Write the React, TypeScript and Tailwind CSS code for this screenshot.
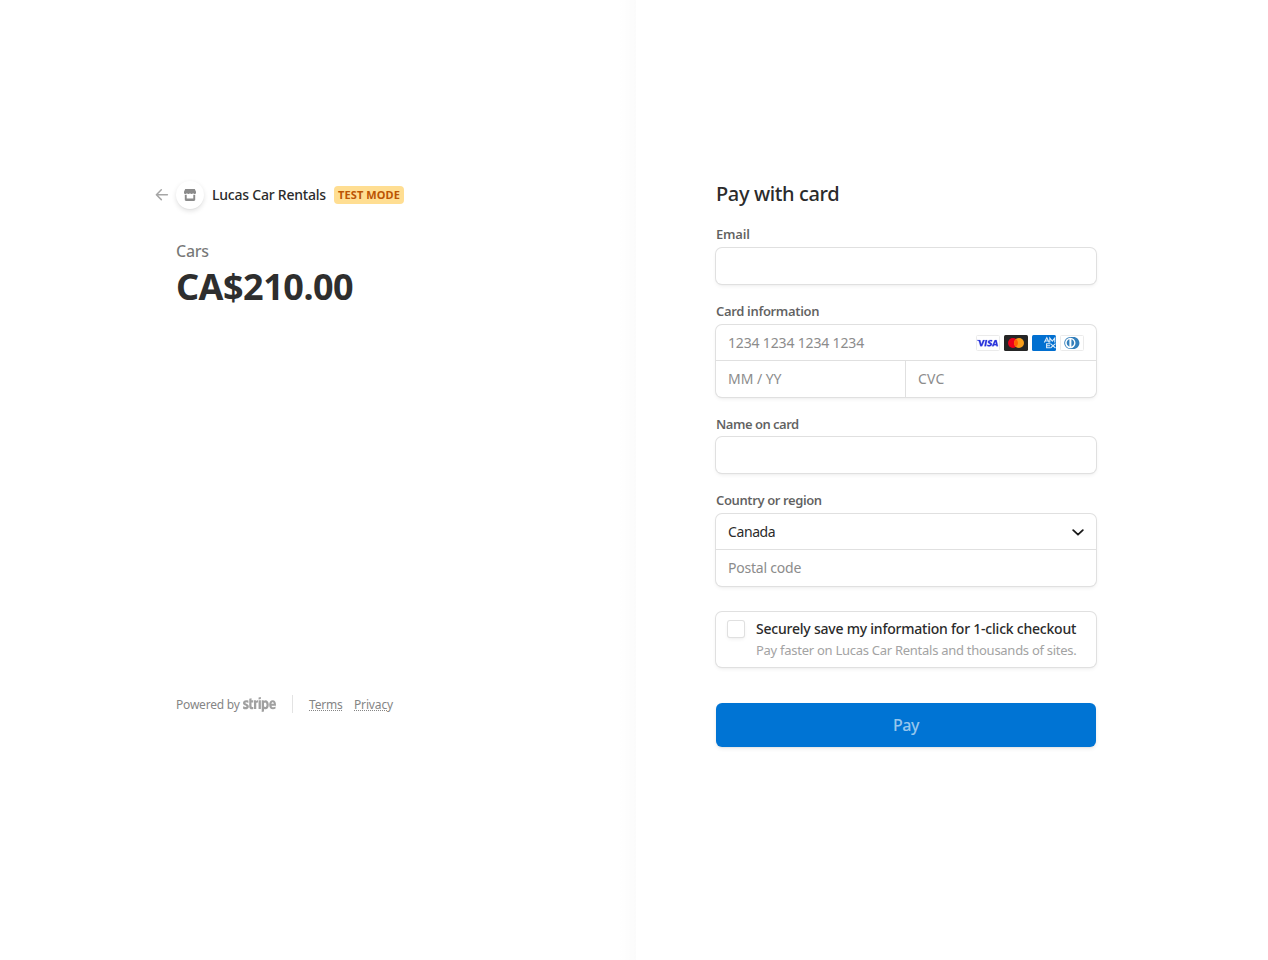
import type { ReactNode } from "react";

const box =
  "rounded-[6px] bg-white shadow-[0_0_0_1px_#e0e0e0,0_2px_4px_0_rgba(0,0,0,0.07),0_1px_1.5px_0_rgba(0,0,0,0.05)]";

function Label({ children, className }: { children: ReactNode; className: string }) {
  return (
    <div className={`h-[26px] text-[13px] font-semibold text-[#1a1a1a]/70 ${className}`}>{children}</div>
  );
}

function StoreIcon() {
  return (
    <svg width="12" height="12" viewBox="0 0 12 12" fill="#8a8a8a">
      <path d="M1.200 0h9.600L12 2.800v1c0 .8-.6 1.300-1.400 1.300-.7 0-1.200-.3-1.500-.8-.3.500-.9.800-1.600.8S6.300 4.800 6 4.300c-.3.500-.8.800-1.500.800s-1.300-.3-1.600-.8c-.3.500-.8.800-1.500.800C.6 5.100 0 4.600 0 3.800v-1z" />
      <path d="M.800 5.700h1.900v3.700h6.600V5.700h1.900v5.100c0 .7-.5 1.200-1.200 1.200H2c-.7 0-1.200-.5-1.200-1.200z" />
    </svg>
  );
}

function Visa() {
  return (
    <svg width="24" height="16" viewBox="0 0 24 16">
      <rect x=".5" y=".5" width="23" height="15" rx="1" fill="#fff" stroke="#ebebeb" />
      <path
        fill="#2b35dc"
        stroke="#2b35dc"
        strokeWidth=".2"
        d="M2.788 5.914A7.201 7.201 0 0 0 1 5.237l.028-.125h2.737c.371.013.672.125.77.519l.595 2.836.182.854 1.666-4.21h1.799l-2.674 6.167H4.304L2.788 5.914Zm7.312 5.370H8.399l1.064-6.172h1.701L10.100 11.284Zm6.167-6.021-.232 1.333-.153-.066a3.054 3.054 0 0 0-1.268-.236c-.671 0-.972.269-.98.531 0 .29.365.480.96.762.980.440 1.435.979 1.428 1.681-.014 1.280-1.176 2.108-2.960 2.108-.764-.007-1.500-.158-1.898-.328l.238-1.386.224.099c.553.230.917.328 1.596.328.490 0 1.015-.190 1.022-.604 0-.270-.224-.466-.882-.769-.644-.295-1.505-.788-1.491-1.674C11.878 5.840 13.060 5 14.740 5c.658 0 1.190.138 1.526.263Zm2.260 3.834h1.415c-.070-.308-.392-1.786-.392-1.786l-.120-.531c-.083.230-.230.604-.223.590l-.680 1.727Zm2.100-3.985L22 11.284h-1.575s-.154-.710-.203-.926h-2.184l-.357.926h-1.785l2.527-5.660c.175-.400.483-.512.889-.512h1.315Z"
      />
    </svg>
  );
}

function Mastercard() {
  return (
    <svg width="24" height="16" viewBox="0 0 24 16">
      <rect width="24" height="16" rx="1.500" fill="#252525" />
      <circle cx="9" cy="8" r="5" fill="#eb001b" />
      <circle cx="15" cy="8" r="5" fill="#f79e1b" />
      <path d="M12 4a5 5 0 0 0 0 8 5 5 0 0 0 0-8z" fill="#ff5f00" />
    </svg>
  );
}

function Amex() {
  return (
    <svg width="24" height="16" viewBox="0 0 24 16">
      <rect width="24" height="16" rx="1.500" fill="#016fd0" />
      <g fill="none" stroke="#fff" strokeOpacity=".85" strokeWidth="1.100">
        <path d="M12.300 7.600 14.800 2.800l2.400 4.800M13.300 6h3" />
        <path d="M17.800 7.600V3.100l2.500 3.100 2.500-3.100v4.500" />
        <path d="M18.200 8.800h-3.600v4h3.600M14.600 10.800h3.400" />
        <path d="M18.500 8.600l5 4.400M23.500 8.600l-5 4.400" />
      </g>
    </svg>
  );
}

function Diners() {
  return (
    <svg width="24" height="16" viewBox="0 0 24 16">
      <rect x=".5" y=".5" width="23" height="15" rx="1" fill="#fff" stroke="#ebebeb" />
      <path d="M10.200 2h3.200c3.400 0 6 2.700 6 6s-2.600 6-6 6h-3.200a6 6 0 0 1 0-12z" fill="#3480bc" />
      <circle cx="10.300" cy="8" r="5.200" fill="#fff" />
      <path d="M9.400 4.200a4 4 0 0 0 0 7.600zM11.400 4.200v7.600a4 4 0 0 0 0-7.600z" fill="#3480bc" />
    </svg>
  );
}

function Summary() {
  return (
    <section className="flex w-[636px] flex-col bg-white bg-[linear-gradient(to_right,transparent_618px,rgba(0,0,0,0.017)_636px)] pt-[181px] pl-[155px]">
      <header className="flex h-7 items-center">
        <svg width="14" height="12" viewBox="0 0 14 12" fill="none" stroke="#a6a6a6" strokeWidth="1.500" strokeLinecap="round" strokeLinejoin="round">
          <path d="M6.300.8 1.400 5.700l4.900 4.900M1.600 5.700h10.800" />
        </svg>
        <div className="ml-[7px] flex size-7 items-center justify-center rounded-full bg-white shadow-[0_2px_5px_rgba(0,0,0,0.12),0_1px_1px_rgba(0,0,0,0.03)]">
          <StoreIcon />
        </div>
        <h1 className="ml-2 w-[122px] text-[14px] leading-5 font-medium tracking-[-0.22px] whitespace-nowrap text-[#2b2b2b]">
          Lucas Car Rentals
        </h1>
        <span className="flex h-[18px] w-[70px] items-center justify-center rounded-[4px] bg-[#ffde92] text-[11px] font-bold tracking-[0.1px] whitespace-nowrap text-[#bb5504]">
          TEST MODE
        </span>
      </header>
      <div className="mt-[30px] ml-[21px] flex h-[450px] flex-col">
        <div className="h-6 text-[16px] leading-6 font-medium tracking-[-0.25px] text-[#1a1a1a]/60">Cars</div>
        <div className="mt-px h-[46px] text-[36px] leading-[46px] font-bold tracking-[-0.5px] text-[#2e2e2e]">
          CA$210.00
        </div>
      </div>
      <footer className="mt-[6px] ml-[21px] flex h-[18px] items-center text-[12px] leading-[18px] text-[#858585]">
        <span className="w-[67px] pt-[2px] tracking-[-0.2px] whitespace-nowrap">Powered by</span>
        <svg width="33" height="15" viewBox="54 36 360.020 149.840" preserveAspectRatio="none" fill="#a0a0a0" fillRule="evenodd" aria-label="Stripe">
          <path d="M414 113.400c0-25.600-12.400-45.800-36.100-45.800-23.800 0-38.200 20.200-38.200 45.600 0 30.100 17 45.300 41.400 45.300 11.900 0 20.900-2.700 27.700-6.500v-20c-6.800 3.400-14.600 5.500-24.500 5.500-9.700 0-18.300-3.400-19.400-15.200h48.900c0-1.300.2-6.500.2-8.900zm-49.400-9.500c0-11.300 6.900-16 13.200-16 6.100 0 12.600 4.700 12.600 16h-25.800z" />
          <path d="M301.100 67.600c-9.800 0-16.100 4.600-19.600 7.800l-1.300-6.200h-22v116.600l25-5.300.1-28.300c3.600 2.600 8.900 6.300 17.700 6.300 17.900 0 34.200-14.400 34.200-46.100-.1-29-16.600-44.800-34.100-44.800zm-6 68.900c-5.900 0-9.400-2.100-11.800-4.700l-.1-37.100c2.600-2.900 6.200-4.900 11.900-4.900 9.100 0 15.400 10.200 15.400 23.300 0 13.400-6.200 23.400-15.400 23.400z" />
          <path d="M223.800 61.700l25.100-5.400V36l-25.100 5.300zM223.800 69.300h25.100v87.500h-25.100zM196.900 76.700l-1.600-7.400h-21.600v87.500h25V97.500c5.900-7.700 15.900-6.300 19-5.200v-23c-3.200-1.200-14.900-3.400-20.800 7.400zM146.900 47.600l-24.400 5.200-.1 80.100c0 14.800 11.100 25.700 25.900 25.700 8.200 0 14.200-1.500 17.500-3.300V135c-3.200 1.300-19 5.900-19-8.900V90.600h19V69.300h-19zM79.300 94.700c0-3.900 3.200-5.400 8.500-5.400 7.600 0 17.200 2.300 24.800 6.400V72.200c-8.300-3.300-16.500-4.600-24.800-4.600C67.500 67.600 54 78.200 54 95.900c0 27.600 38 23.200 38 35.100 0 4.600-4 6.100-9.600 6.100-8.300 0-18.900-3.400-27.300-8v23.800c9.300 4 18.700 5.700 27.300 5.700 20.800 0 35.100-10.300 35.100-28.200-.1-29.800-38.200-24.500-38.200-35.700z" />
        </svg>
        <span className="ml-4 h-[18px] w-px bg-[#e3e3e3]" />
        <a className="ml-4 w-[45px] pt-[2px] tracking-[-0.2px] underline decoration-dotted underline-offset-1">Terms</a>
        <a className="pt-[2px] tracking-[-0.15px] underline decoration-dotted underline-offset-1">Privacy</a>
      </footer>
    </section>
  );
}

function Payment() {
  return (
    <section className="flex flex-1 flex-col bg-white pt-[179px] pl-20">
      <form className="flex w-[380px] flex-col">
        <h2 className="h-[43px] text-[20px] leading-[30px] font-medium tracking-[-0.37px] text-[#2b2b2b]">Pay with card</h2>
        <Label className="leading-[25px] tracking-[-0.2px]">Email</Label>
        <div className={`h-9 ${box}`} />
        <Label className="mt-[15px] leading-[25px] tracking-[-0.34px]">Card information</Label>
        <div className={`text-[14px] text-[#8c8c8c] ${box}`}>
          <div className="flex h-9 items-center justify-between border-b border-[#e0e0e0] px-3">
            <span className="tracking-[-0.16px]">1234 1234 1234 1234</span>
            <span className="flex gap-1">
              <Visa />
              <Mastercard />
              <Amex />
              <Diners />
            </span>
          </div>
          <div className="flex h-9">
            <div className="flex w-[190px] items-center border-r border-[#e0e0e0] pb-[2px] pl-3 tracking-[-0.05px]">MM / YY</div>
            <div className="flex flex-1 items-center pb-[2px] pl-3 tracking-[0.2px]">CVC</div>
          </div>
        </div>
        <Label className="mt-[14px] leading-[27px] tracking-[-0.5px]">Name on card</Label>
        <div className={`h-9 ${box}`} />
        <Label className="mt-[15px] leading-[25px] tracking-[-0.4px]">Country or region</Label>
        <div className={`text-[14px] ${box}`}>
          <div className="flex h-9 items-center justify-between border-b border-[#e0e0e0] px-3 text-[#2b2b2b]">
            <span className="tracking-[-0.4px]">Canada</span>
            <svg width="12" height="12" viewBox="0 0 12 12" fill="none" stroke="#1a1a1a" strokeWidth="1.800" strokeLinecap="round" strokeLinejoin="round">
              <path d="m1.200 4.200 4.800 4.500 4.800-4.500" />
            </svg>
          </div>
          <div className="flex h-9 items-center pb-[2px] pl-3 tracking-[-0.22px] text-[#8c8c8c]">Postal code</div>
        </div>
        <div className={`mt-[26px] flex h-[55px] pl-3 ${box}`}>
          <span className="mt-[9px] size-4 shrink-0 rounded-[2px] bg-white shadow-[0_0_0_1px_#e0e0e0,0_2px_4px_0_rgba(0,0,0,0.07),0_1px_1.5px_0_rgba(0,0,0,0.05)]" />
          <div className="ml-3 pt-[7px] whitespace-nowrap">
            <div className="text-[14px] leading-5 font-medium tracking-[-0.22px] text-[#2b2b2b]">
              Securely save my information for 1-click checkout
            </div>
            <div className="mt-px text-[13px] leading-5 tracking-[-0.27px] text-[#a3a3a3]">
              Pay faster on Lucas Car Rentals and thousands of sites.
            </div>
          </div>
        </div>
        <button
          type="button"
          className="mt-9 h-11 rounded-[6px] bg-[#0074d4] text-[16px] leading-6 font-medium tracking-[-0.5px] text-white/60 shadow-[0_2px_4px_0_rgba(0,0,0,0.07),0_1px_1.5px_0_rgba(0,0,0,0.05)]"
        >
          Pay
        </button>
      </form>
    </section>
  );
}

export default function App() {
  return (
    <main className="flex h-[960px] w-full overflow-hidden bg-white font-['Noto_Sans',sans-serif]">
      <Summary />
      <Payment />
    </main>
  );
}
